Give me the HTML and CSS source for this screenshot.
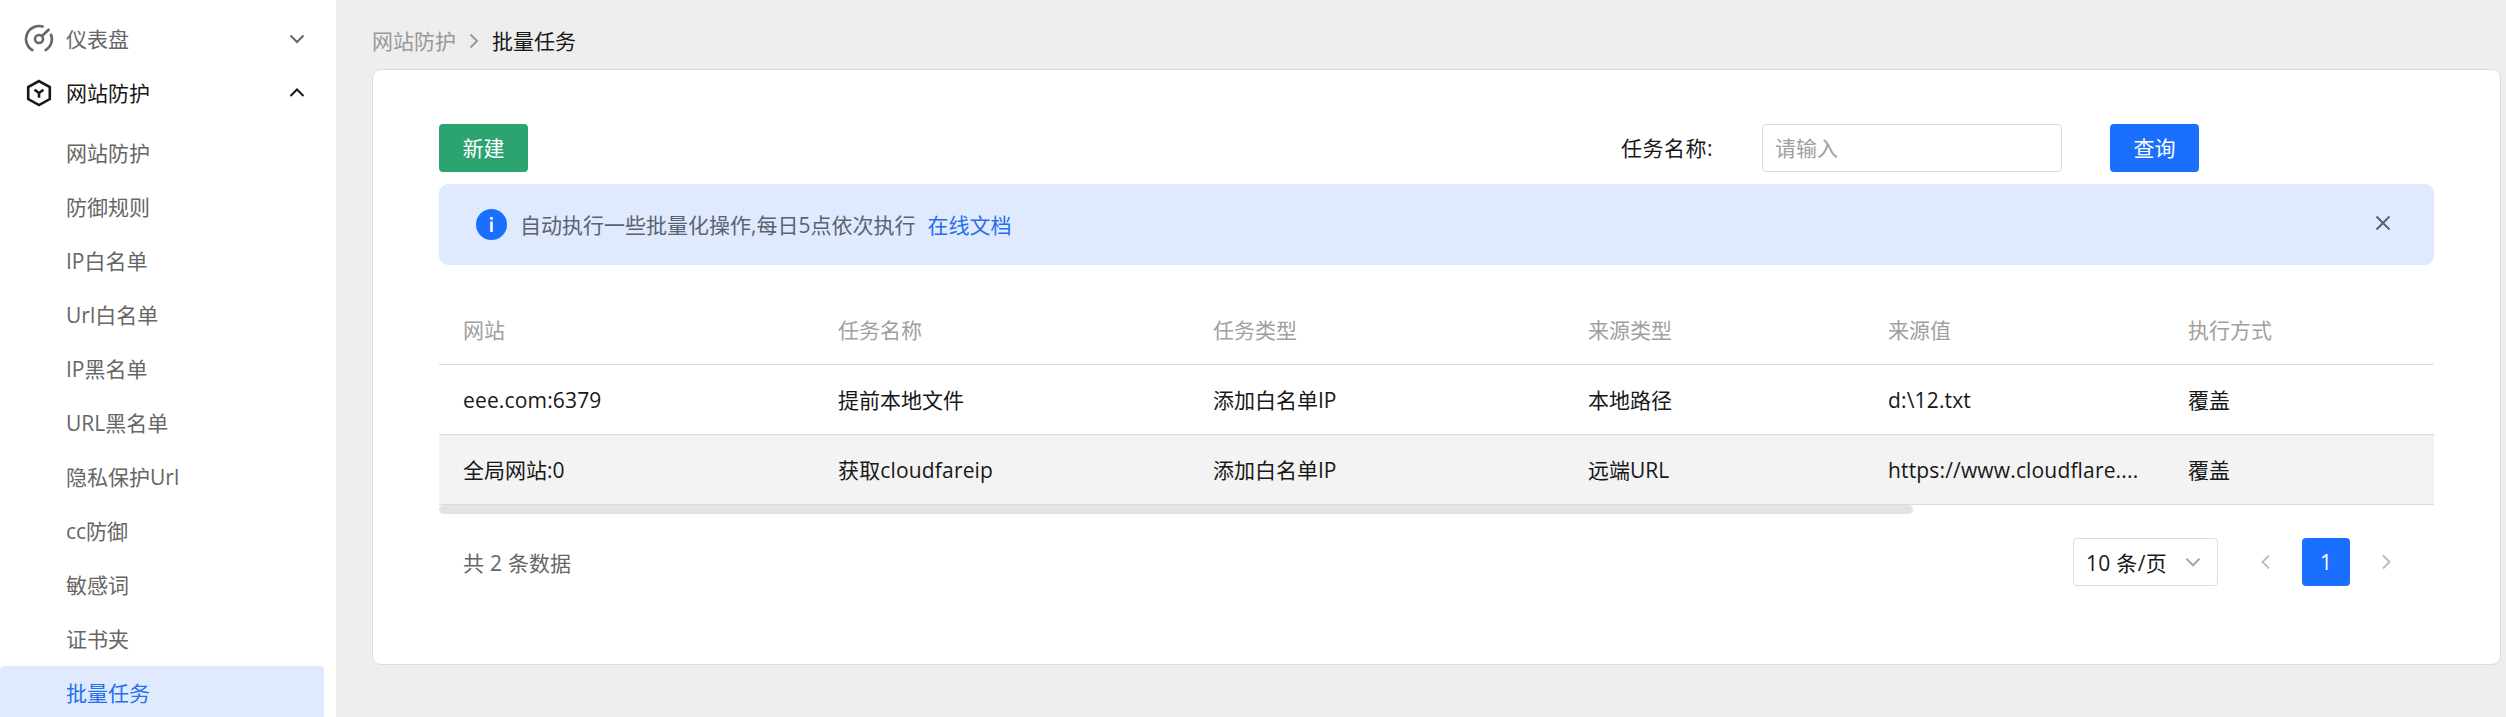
FILE: index.html
```html
<!DOCTYPE html>
<html lang="zh-CN">
<head>
<meta charset="utf-8">
<title>批量任务</title>
<link rel="stylesheet" href="styles.css">
</head>
<body>
<div class="app">
  <nav class="sidebar">
    <a class="menu-item">
      <svg class="menu-icon" viewBox="0 0 32 32"><path d="M10.300 27.700A13 13 0 0 1 20.700 3.900M27.700 10.700A13 13 0 0 1 21.700 27.700M18.800 13.200L26.300 6" /><circle cx="16" cy="16" r="4" /></svg>
      <span>仪表盘</span>
      <svg class="arrow" viewBox="0 0 16 16"><path d="M1.500 4.500L8 11L14.500 4.500" /></svg>
    </a>
    <a class="menu-item open">
      <svg class="menu-icon" viewBox="0 0 32 32"><path d="M16 4.100L26.800 10.100V22.100L16 28.100L5.200 22.100V10.100ZM11.500 12.800L16 16L20.500 12.800M16 16V20.800" /></svg>
      <span>网站防护</span>
      <svg class="arrow" viewBox="0 0 16 16"><path d="M1.500 11L8 4.500L14.500 11" /></svg>
    </a>
    <div class="submenu">
      <a class="menu-item">网站防护</a>
      <a class="menu-item">防御规则</a>
      <a class="menu-item">IP白名单</a>
      <a class="menu-item">Url白名单</a>
      <a class="menu-item">IP黑名单</a>
      <a class="menu-item">URL黑名单</a>
      <a class="menu-item">隐私保护Url</a>
      <a class="menu-item">cc防御</a>
      <a class="menu-item">敏感词</a>
      <a class="menu-item">证书夹</a>
      <a class="menu-item active">批量任务</a>
    </div>
  </nav>
  <main class="main">
    <div class="breadcrumb">
      <span class="crumb">网站防护</span>
      <svg class="crumb-sep" viewBox="0 0 10 16"><path d="M1.500 1.500L8 8L1.500 14.500" /></svg>
      <span>批量任务</span>
    </div>
    <section class="card">
      <div class="toolbar">
        <button class="btn success">新建</button>
        <div class="search">
          <label class="label">任务名称:</label>
          <input class="input" placeholder="请输入">
          <button class="btn primary">查询</button>
        </div>
      </div>
      <div class="alert">
        <svg class="info" viewBox="0 0 31 31"><circle cx="15.500" cy="15.500" r="15.500" /><path d="M14.200 8h2.600v2.800h-2.600zM14.200 12.600h2.600v10.400h-2.600z" /></svg>
        <span class="message">自动执行一些批量化操作,每日5点依次执行</span>
        <a class="link">在线文档</a>
        <svg class="close" viewBox="0 0 16 16"><path d="M1.500 1.500L14.500 14.500M14.500 1.500L1.500 14.500" /></svg>
      </div>
      <div class="table">
        <div class="row head"><div>网站</div><div>任务名称</div><div>任务类型</div><div>来源类型</div><div>来源值</div><div>执行方式</div></div>
        <div class="row"><div class="latin">eee.com:6379</div><div>提前本地文件</div><div>添加白名单IP</div><div>本地路径</div><div class="latin">d:\12.txt</div><div>覆盖</div></div>
        <div class="row hover"><div>全局网站:0</div><div class="latin">获取cloudfareip</div><div>添加白名单IP</div><div>远端URL</div><div class="latin">https://www.cloudflare....</div><div>覆盖</div></div>
        <div class="scrollbar"></div>
      </div>
      <div class="pagination">
        <span class="total">共 2 条数据</span>
        <div class="select"><span>10 条/页</span><svg class="arrow" viewBox="0 0 16 16"><path d="M1.500 4.800L8 11.300L14.500 4.800" /></svg></div>
        <div class="pager"><svg viewBox="0 0 10 16"><path d="M8 1.500L1.500 8L8 14.500" /></svg></div>
        <div class="pager current">1</div>
        <div class="pager"><svg viewBox="0 0 10 16"><path d="M2 1.500L8.500 8L2 14.500" /></svg></div>
      </div>
    </section>
  </main>
</div>
</body>
</html>
```
FILE: styles.css
```css
* {
  box-sizing: border-box;
}

body {
  margin: 0;
  font: 400 21px/33px "Open Sans", "Noto Sans CJK SC", sans-serif;
  color: #181818;
  background: #eee;
}

svg {
  fill: none;
  stroke: currentColor;
  stroke-width: 2;
  flex: none;
}

.app {
  display: flex;
  height: 717px;
  overflow: hidden;
}

.sidebar {
  flex: none;
  width: 336px;
  padding-top: 12px;
  background: #fff;
}

.menu-item {
  display: flex;
  align-items: center;
  height: 54px;
  padding: 0 31px 0 23px;
  color: #666;
  white-space: nowrap;
}

.menu-item.open {
  color: #181818;
}

.menu-icon {
  width: 32px;
  height: 32px;
  margin-right: 11px;
  stroke-width: 2.6;
}

.arrow {
  width: 16px;
  height: 16px;
  margin-left: auto;
}

.submenu {
  padding-top: 6px;
}

.submenu .menu-item {
  width: 324px;
  padding-left: 66px;
}

.submenu .active {
  color: #266fe8;
  background: #e0eaff;
  border-radius: 4px;
}

.main {
  flex: 1;
  padding: 23px 5px 0 36px;
}

.breadcrumb {
  display: flex;
  align-items: center;
  height: 36px;
}

.crumb,
.crumb-sep {
  color: #999;
}

.crumb-sep {
  width: 10px;
  height: 16px;
  margin: 0 13px 0 13px;
}

.card {
  height: 596px;
  margin-top: 10px;
  padding: 54px 66px;
  border: 1px solid #dcdcdc;
  border-radius: 9px;
  background: #fff;
}

.toolbar,
.search {
  display: flex;
  align-items: center;
}

.toolbar {
  justify-content: space-between;
  height: 48px;
}

.search {
  margin-right: 235px;
}

.label {
  width: 141px;
  letter-spacing: 0.5px;
}

.input {
  width: 300px;
  height: 48px;
  margin-right: 48px;
  padding: 0 12px;
  border: 1px solid #dcdcdc;
  border-radius: 4px;
  font: inherit;
}

.input::placeholder {
  color: #a0a0a0;
}

.btn {
  width: 89px;
  height: 48px;
  padding: 0;
  border: 0;
  border-radius: 4px;
  font: inherit;
  color: #fff;
}

.success {
  background: #2ba471;
}

.primary {
  background: #1a6fff;
}

.alert {
  display: flex;
  align-items: center;
  height: 81px;
  margin-top: 12px;
  padding: 0 43px 0 37px;
  border-radius: 9px;
  color: #5d626d;
  background: #e0eaff;
}

.info {
  width: 31px;
  height: 31px;
  margin-right: 13px;
  stroke: none;
}

.info circle {
  fill: #1a6fff;
}

.info path {
  fill: #fff;
}

.message,
.link {
  padding-top: 2px;
}

.link {
  margin-left: 12px;
  color: #266fe8;
}

.close {
  width: 16px;
  height: 16px;
  margin: 0 0 3px auto;
}

.table {
  margin-top: 30px;
}

.row {
  display: grid;
  grid-template-columns: 375px 375px 375px 300px 300px 1fr;
  align-items: center;
  height: 70px;
  border-bottom: 1px solid #dcdcdc;
}

.row > div {
  padding: 2px 0 0 24px;
  white-space: nowrap;
}

.latin {
  letter-spacing: 0.16px;
}

.head {
  color: #a0a0a0;
}

.hover {
  background: #f3f3f3;
}

.scrollbar {
  width: 1474px;
  height: 9px;
  border-radius: 4.5px;
  background: #e3e3e3;
}

.pagination {
  display: flex;
  align-items: center;
  height: 48px;
  margin-top: 24px;
  padding: 0 24px;
}

.total {
  flex: 1;
  padding-top: 2px;
  color: #666;
  word-spacing: 0.6px;
}

.select {
  display: flex;
  align-items: center;
  width: 145px;
  height: 48px;
  margin-right: 24px;
  padding: 0 16px 0 12px;
  border: 1px solid #dcdcdc;
  border-radius: 4px;
  white-space: nowrap;
}

.select span {
  padding-top: 2px;
  letter-spacing: 0.3px;
}

.select .arrow {
  color: #a6a6a6;
}

.pager {
  display: flex;
  align-items: center;
  justify-content: center;
  width: 48px;
  height: 48px;
  margin-left: 12px;
  border-radius: 4px;
  color: #bdbdbd;
}

.select + .pager {
  margin-left: 0;
}

.pager svg {
  width: 10px;
  height: 16px;
}

.current {
  color: #fff;
  background: #1a6fff;
}
```
